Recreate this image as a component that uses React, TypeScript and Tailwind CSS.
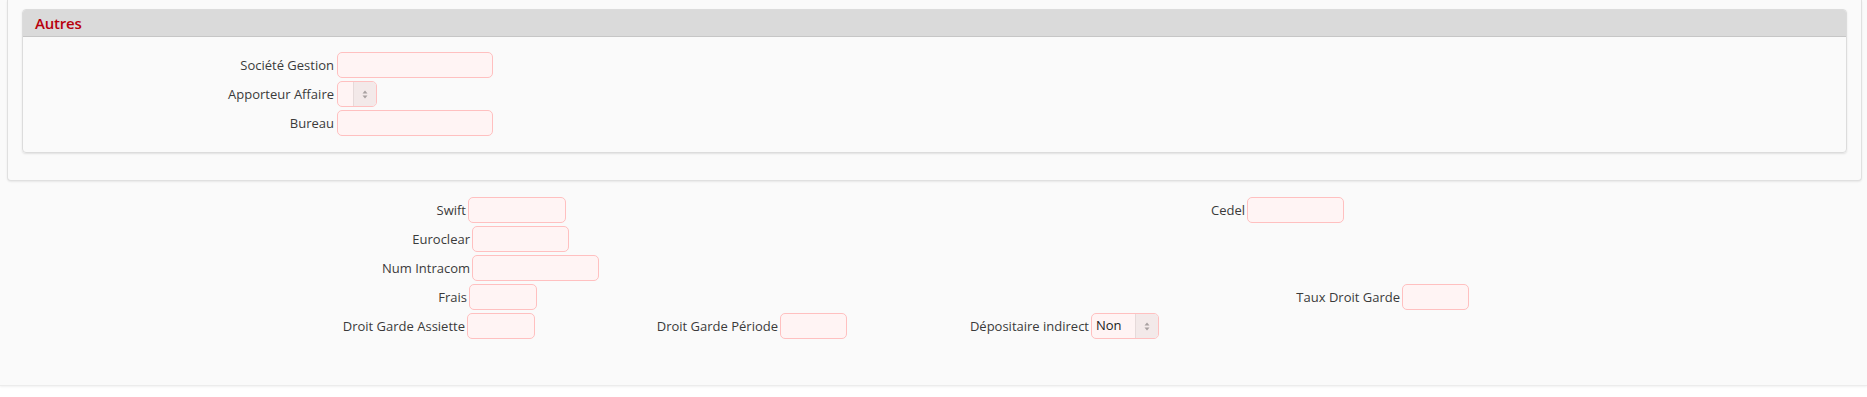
import React from "react";

const inputCls =
  "h-[26px] border border-[#ffc0c0] bg-[#fff4f4] rounded-[5px] box-border shrink-0";

function Input({ w, ml = 2 }: { w: number; ml?: number }) {
  return <div className={inputCls} style={{ width: w, marginLeft: ml }} />;
}

function Arrows() {
  return (
    <svg width="6" height="9" viewBox="0 0 6 9">
      <path d="M3 0.5 L5.5 3.5 L0.5 3.5 Z" fill="#a8a0a0" />
      <path d="M3 8.5 L5.5 5.5 L0.5 5.5 Z" fill="#a8a0a0" />
    </svg>
  );
}

function Select({ w, text, ml = 2 }: { w: number; text?: string; ml?: number }) {
  return (
    <div
      className="h-[26px] border border-[#ffc0c0] bg-[#fff4f4] rounded-[5px] box-border shrink-0 flex items-stretch overflow-hidden"
      style={{ width: w, marginLeft: ml }}
    >
      <div className="flex-1 flex items-center pl-[4px] text-[13px] text-[#222]">{text}</div>
      <div className="w-[23px] bg-[#f3e9e9] border-l border-[#e6dada] flex items-center justify-center">
        <Arrows />
      </div>
    </div>
  );
}

function Label({ w, children }: { w: number; children?: React.ReactNode }) {
  return (
    <div className="shrink-0 text-right text-[13px] text-[#3a3a3a] whitespace-nowrap leading-[26px]" style={{ width: w }}>
      {children}
    </div>
  );
}

export default function App() {
  return (
    <div
      className="w-[1867px] h-[397px] bg-white overflow-hidden"
      style={{ fontFamily: "'Open Sans', 'Noto Sans', sans-serif" }}
    >
      <div className="h-[386px] bg-[#fafafa] border-b border-[#ececec] shadow-[0_1px_2px_rgba(0,0,0,0.06)] flex flex-col">
        {/* outer panel */}
        <div className="ml-[7px] mr-[5px] h-[181px] border border-t-0 border-[#e0e0e0] rounded-b-[4px] shadow-[0_1px_2px_rgba(0,0,0,0.08)] bg-[#fafafa] px-[14px] pt-[9px]">
          <div className="h-[144px] border border-[#dcdcdc] rounded-[4px] shadow-[0_1px_2px_rgba(0,0,0,0.1)] overflow-hidden">
            <div className="h-[27px] bg-[#dadada] border-b border-[#c6c6c6] pl-[12px] flex items-center">
              <span className="text-[15px] font-semibold tracking-[-0.2px] text-[#b8000c] leading-none">Autres</span>
            </div>
            <div className="pt-[15px] flex flex-col gap-[3px]">
              <div className="flex items-center">
                <Label w={311}>Société Gestion</Label>
                <Input w={156} ml={3} />
              </div>
              <div className="flex items-center">
                <Label w={311}>Apporteur Affaire</Label>
                <Select w={40} ml={3} />
              </div>
              <div className="flex items-center">
                <Label w={311}>Bureau</Label>
                <Input w={156} ml={3} />
              </div>
            </div>
          </div>
        </div>

        {/* lower fields */}
        <div className="mt-[16px] flex flex-col gap-[3px]">
          <div className="flex items-center">
            <Label w={466}>Swift</Label>
            <Input w={98} />
            <Label w={679}>Cedel</Label>
            <Input w={97} />
          </div>
          <div className="flex items-center">
            <Label w={470}>Euroclear</Label>
            <Input w={97} />
          </div>
          <div className="flex items-center">
            <Label w={470}>Num Intracom</Label>
            <Input w={127} />
          </div>
          <div className="flex items-center">
            <Label w={467}>Frais</Label>
            <Input w={68} />
            <Label w={863}>Taux Droit Garde</Label>
            <Input w={67} />
          </div>
          <div className="flex items-center">
            <Label w={465}>Droit Garde Assiette</Label>
            <Input w={68} />
            <Label w={243}>Droit Garde Période</Label>
            <Input w={67} />
            <Label w={242}>Dépositaire indirect</Label>
            <Select w={68} text="Non" />
          </div>
        </div>
      </div>
    </div>
  );
}
